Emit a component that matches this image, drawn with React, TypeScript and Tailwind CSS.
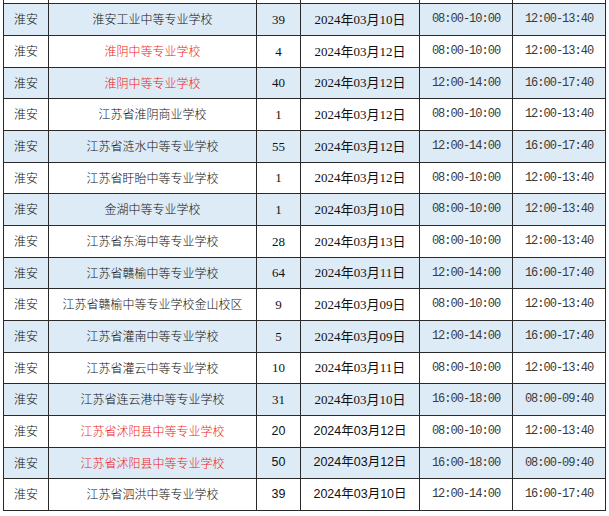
import React from "react";

type Row = {
  school: string;
  red?: boolean;
  num: string;
  date: string;
  t1: string;
  t2: string;
  sans?: boolean;
};

const rows: Row[] = [
  { school: "淮安工业中等专业学校", num: "39", date: "2024年03月10日", t1: "08:00-10:00", t2: "12:00-13:40" },
  { school: "淮阴中等专业学校", red: true, num: "4", date: "2024年03月12日", t1: "08:00-10:00", t2: "12:00-13:40" },
  { school: "淮阴中等专业学校", red: true, num: "40", date: "2024年03月12日", t1: "12:00-14:00", t2: "16:00-17:40" },
  { school: "江苏省淮阴商业学校", num: "1", date: "2024年03月12日", t1: "08:00-10:00", t2: "12:00-13:40" },
  { school: "江苏省涟水中等专业学校", num: "55", date: "2024年03月12日", t1: "12:00-14:00", t2: "16:00-17:40" },
  { school: "江苏省盱眙中等专业学校", num: "1", date: "2024年03月12日", t1: "08:00-10:00", t2: "12:00-13:40" },
  { school: "金湖中等专业学校", num: "1", date: "2024年03月10日", t1: "08:00-10:00", t2: "12:00-13:40" },
  { school: "江苏省东海中等专业学校", num: "28", date: "2024年03月13日", t1: "08:00-10:00", t2: "12:00-13:40" },
  { school: "江苏省赣榆中等专业学校", num: "64", date: "2024年03月11日", t1: "12:00-14:00", t2: "16:00-17:40" },
  { school: "江苏省赣榆中等专业学校金山校区", num: "9", date: "2024年03月09日", t1: "08:00-10:00", t2: "12:00-13:40" },
  { school: "江苏省灌南中等专业学校", num: "5", date: "2024年03月09日", t1: "12:00-14:00", t2: "16:00-17:40" },
  { school: "江苏省灌云中等专业学校", num: "10", date: "2024年03月11日", t1: "08:00-10:00", t2: "12:00-13:40" },
  { school: "江苏省连云港中等专业学校", num: "31", date: "2024年03月10日", t1: "16:00-18:00", t2: "08:00-09:40" },
  { school: "江苏省沭阳县中等专业学校", red: true, num: "20", date: "2024年03月12日", t1: "08:00-10:00", t2: "12:00-13:40", sans: true },
  { school: "江苏省沭阳县中等专业学校", red: true, num: "50", date: "2024年03月12日", t1: "16:00-18:00", t2: "08:00-09:40", sans: true },
  { school: "江苏省泗洪中等专业学校", num: "39", date: "2024年03月10日", t1: "12:00-14:00", t2: "16:00-17:40", sans: true },
];

const cjk = "font-['Noto_Sans_CJK_SC',sans-serif] text-[12px] font-light";
const serifNum = "font-['Liberation_Serif','Noto_Sans_CJK_SC',serif] text-[13px]";
const sansNum = "font-['Liberation_Sans','Noto_Sans_CJK_SC',sans-serif] text-[12.5px]";
const mono = "font-['Liberation_Mono',monospace] text-[12px] tracking-[-1px] text-[#3a3a3a]";

const cell = "border border-[#2a2a2a] text-center align-middle p-0 leading-none whitespace-nowrap";

export default function App() {
  return (
    <div className="w-[609px] h-[516px] bg-white overflow-hidden pl-[3px] text-[#111]">
      <table className="table-fixed border-collapse w-[602px]">
        <colgroup>
          <col className="w-[45px]" />
          <col className="w-[208px]" />
          <col className="w-[44px]" />
          <col className="w-[119px]" />
          <col className="w-[93px]" />
          <col className="w-[93px]" />
        </colgroup>
        <tbody>
          <tr className="h-[3px]">
            <td className="border-x border-[#2a2a2a] p-0" />
            <td className="border-x border-[#2a2a2a] p-0" />
            <td className="border-x border-[#2a2a2a] p-0" />
            <td className="border-x border-[#2a2a2a] p-0" />
            <td className="border-x border-[#2a2a2a] p-0" />
            <td className="border-x border-[#2a2a2a] p-0" />
          </tr>
          {rows.map((r, i) => {
            const bg = i % 2 === 0 ? "bg-[#ddebf7]" : "bg-white";
            const h = i % 3 === 2 ? "h-[31px]" : "h-[32px]";
            const num = r.sans ? sansNum : serifNum;
            return (
              <tr key={i} className={`${bg} ${h}`}>
                <td className={`${cell} ${cjk}`}>淮安</td>
                <td className={`${cell} ${cjk} ${r.red ? "text-[#f01818]" : ""}`}>{r.school}</td>
                <td className={`${cell} ${num}`}>{r.num}</td>
                <td className={`${cell} ${num}`}>{r.date}</td>
                <td className={`${cell} ${mono}`}>{r.t1}</td>
                <td className={`${cell} ${mono}`}>{r.t2}</td>
              </tr>
            );
          })}
        </tbody>
      </table>
    </div>
  );
}
